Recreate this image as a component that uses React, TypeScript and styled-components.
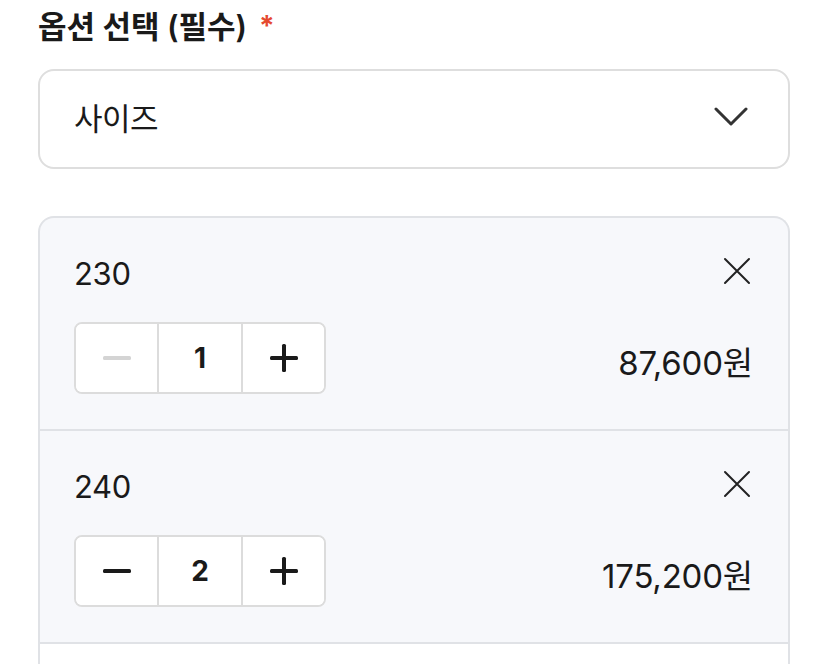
import React from "react";
import styled, { createGlobalStyle } from "styled-components";

const GlobalStyle = createGlobalStyle`
  body {
    margin: 0;
    background: #ffffff;
    font-family: Inter, "Noto Sans CJK KR", sans-serif;
    color: #1a1a1a;
  }
`;

interface IOption {
  size: string;
  count: number;
  price: string;
}

const options: IOption[] = [
  { size: "230", count: 1, price: "87,600원" },
  { size: "240", count: 2, price: "175,200원" },
];

function App() {
  return (
    <>
      <GlobalStyle />
      <Page>
        <Title>
          옵션 선택 (필수)<Required>*</Required>
        </Title>
        <SelectBox>
          <span>사이즈</span>
          <svg width="34" height="20" viewBox="0 0 34 20" fill="none">
            <path
              d="M2 2 L17 17 L32 2"
              stroke="#333"
              strokeWidth="3"
              strokeLinecap="round"
              strokeLinejoin="round"
            />
          </svg>
        </SelectBox>
        <List>
          {options.map((option) => (
            <Item key={option.size}>
              <ItemTop>
                <Name>{option.size}</Name>
                <CloseBtn>
                  <svg width="28" height="28" viewBox="0 0 28 28" fill="none">
                    <path
                      d="M2 2 L26 26 M26 2 L2 26"
                      stroke="#222"
                      strokeWidth="2"
                      strokeLinecap="round"
                    />
                  </svg>
                </CloseBtn>
              </ItemTop>
              <ItemBottom>
                <Stepper>
                  <StepBtn disabled={option.count <= 1}>
                    <svg width="28" height="4" viewBox="0 0 28 4">
                      <rect
                        width="28"
                        height="4"
                        rx="1.5"
                        fill={option.count <= 1 ? "#d4d4d4" : "#1a1a1a"}
                      />
                    </svg>
                  </StepBtn>
                  <Count>{option.count}</Count>
                  <StepBtn>
                    <svg width="28" height="28" viewBox="0 0 28 28">
                      <rect y="12" width="28" height="4" rx="1.5" fill="#1a1a1a" />
                      <rect x="12" width="4" height="28" rx="1.5" fill="#1a1a1a" />
                    </svg>
                  </StepBtn>
                </Stepper>
                <Price>{option.price}</Price>
              </ItemBottom>
            </Item>
          ))}
          <Summary />
        </List>
      </Page>
    </>
  );
}

export default App;

const Page = styled.div`
  padding: 8px 38px 0;
  display: flex;
  flex-direction: column;
`;

const Title = styled.h2`
  margin: 0;
  height: 38px;
  font-size: 31px;
  line-height: 38px;
  font-weight: 600;
  letter-spacing: -0.1px;
`;

const Required = styled.span`
  color: #e5492f;
  font-size: 28px;
  font-weight: 700;
  line-height: 0;
  margin-left: 12px;
  vertical-align: 2px;
`;

const SelectBox = styled.div`
  margin-top: 23px;
  height: 100px;
  box-sizing: border-box;
  border: 2px solid #dedede;
  border-radius: 16px;
  display: flex;
  align-items: center;
  justify-content: space-between;
  padding: 0 40px 0 34px;
  span {
    font-size: 31px;
    line-height: 1;
    padding-bottom: 2px;
    letter-spacing: -0.5px;
  }
  svg {
    margin-top: -4px;
  }
`;

const List = styled.div`
  margin-top: 47px;
  border: 2px solid #e0e2e6;
  border-bottom: none;
  border-radius: 16px 16px 0 0;
  background: #f7f8fb;
  overflow: hidden;
`;

const Item = styled.div`
  padding: 36px 35px 35px 34px;
  border-bottom: 2px solid #e0e2e6;
  display: flex;
  flex-direction: column;
  gap: 28px;
`;

const ItemTop = styled.div`
  display: flex;
  align-items: center;
  justify-content: space-between;
  height: 40px;
`;

const Name = styled.span`
  font-size: 31px;
  line-height: 40px;
  letter-spacing: -0.3px;
`;

const CloseBtn = styled.button`
  border: none;
  background: none;
  padding: 0;
  margin: -6px 2px 0 0;
  display: flex;
  cursor: pointer;
`;

const ItemBottom = styled.div`
  display: flex;
  align-items: center;
  justify-content: space-between;
`;

const Stepper = styled.div`
  display: flex;
  height: 72px;
  box-sizing: border-box;
  border: 2px solid #dcdcdc;
  border-radius: 8px;
  background: #ffffff;
  overflow: hidden;
`;

const StepBtn = styled.button`
  width: 81px;
  border: none;
  background: #ffffff;
  padding: 0;
  display: flex;
  align-items: center;
  justify-content: center;
  cursor: ${(p) => (p.disabled ? "default" : "pointer")};
`;

const Count = styled.div`
  width: 82px;
  border-left: 2px solid #dcdcdc;
  border-right: 2px solid #dcdcdc;
  display: flex;
  align-items: center;
  justify-content: center;
  font-size: 28px;
  font-weight: 700;
`;

const Price = styled.span`
  font-size: 33px;
  line-height: 40px;
  margin-top: 10px;
  letter-spacing: -0.2px;
`;

const Summary = styled.div`
  height: 40px;
  background: #ffffff;
`;
